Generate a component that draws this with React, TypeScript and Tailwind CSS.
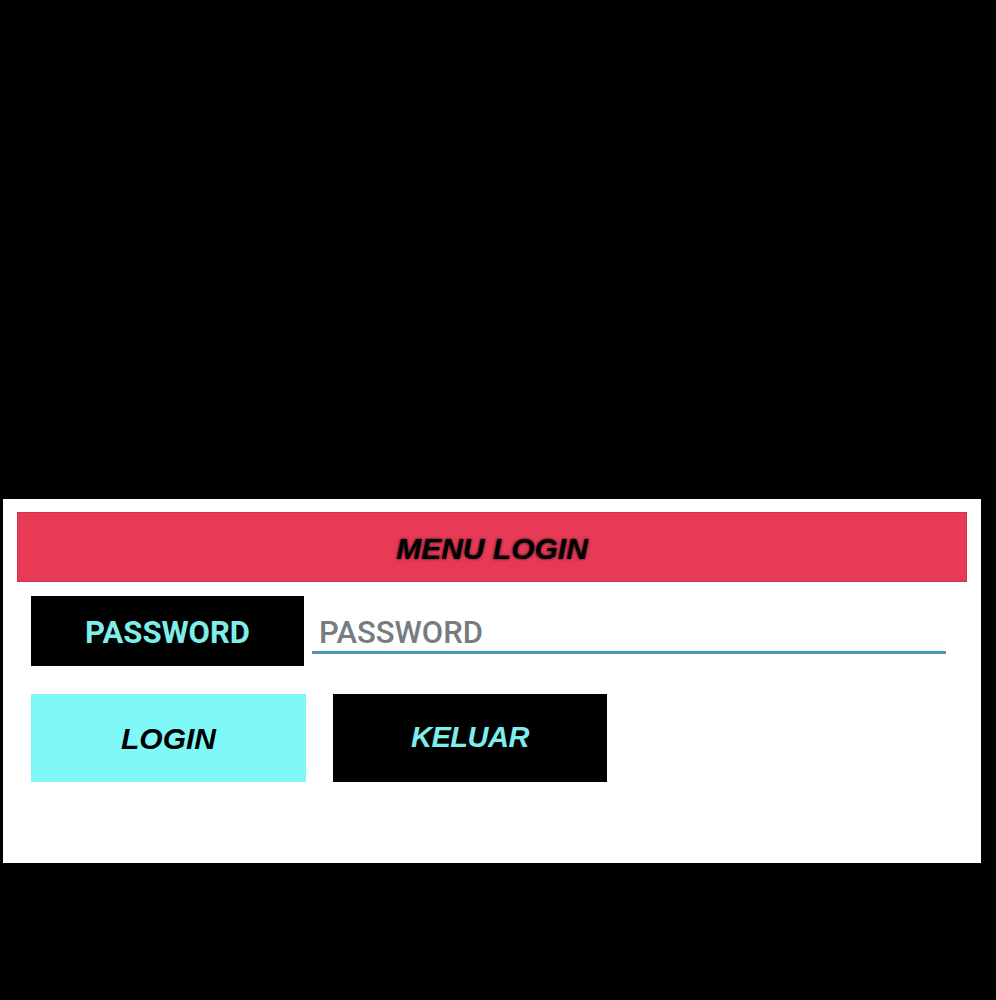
const App = () => {
  return (
    <div className="min-h-[1000px] w-full bg-black pt-[499px] pl-[3px] font-['Roboto','Liberation_Sans',sans-serif]">
      <div className="w-[978px] h-[364px] bg-white pt-[13px] px-[14px]">
        {/* Header */}
        <div className="h-[70px] bg-[#e83a56] flex items-center justify-center border border-[#c9364e]">
          <span className="pt-[2px] font-['Liberation_Sans',Arial,sans-serif] text-[30px] font-bold italic text-black [text-shadow:0_0_3px_rgba(0,0,0,0.8)]">
            MENU LOGIN
          </span>
        </div>

        {/* Password row */}
        <div className="flex items-start mt-[14px] pl-[14px]">
          <div className="w-[273px] h-[70px] bg-black flex items-center justify-center pt-[4px]">
            <span className="text-[31px] font-bold text-[#7eeeea]">PASSWORD</span>
          </div>
          <div className="ml-[8px] w-[634px] h-[58px] border-b-[3px] border-[#4f97b9] flex items-end pl-[7px]">
            <span className="text-[31px] font-medium text-[#777c80] leading-none mb-[3px]">PASSWORD</span>
          </div>
        </div>

        {/* Buttons */}
        <div className="flex items-center mt-[28px] pl-[14px] gap-[27px]">
          <button className="w-[275px] h-[88px] bg-[#7ff9f8] flex items-center justify-center">
            <span className="font-['Liberation_Sans',Arial,sans-serif] text-[30px] font-bold italic text-black">LOGIN</span>
          </button>
          <button className="w-[274px] h-[88px] bg-black flex items-center justify-center">
            <span className="font-['Liberation_Sans',Arial,sans-serif] text-[29px] font-bold italic text-[#7eeeea] tracking-[-0.5px]">KELUAR</span>
          </button>
        </div>
      </div>
    </div>
  );
};

export default App;
